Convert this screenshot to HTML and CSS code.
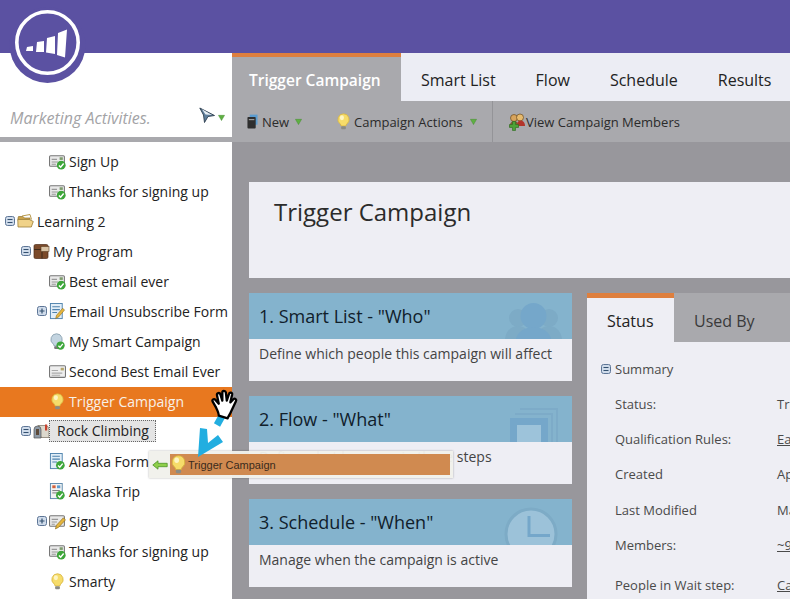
FILE: index.html

```html
<!DOCTYPE html>
<html lang="en">
<head>
  <meta charset="UTF-8" />
  <title>Trigger Campaign</title>
  <link rel="stylesheet" href="styles.css">
</head>
<body>
  <svg class="defs" xmlns="http://www.w3.org/2000/svg">
    <symbol id="i-check" viewBox="0 0 10 10">
      <circle cx="5" cy="5" r="4.6" fill="#3da63a"/>
      <path d="M2.6 5.2 4.4 7 7.5 3.2" fill="none" stroke="#fff" stroke-width="1.5"/>
    </symbol>
    <symbol id="i-email" viewBox="0 0 16 16">
      <rect x="0.5" y="2.5" width="14" height="10" rx="1" fill="#e9e9e9" stroke="#777"/>
      <rect x="10" y="4" width="3" height="2.5" fill="#7d9c6c"/>
      <path d="M2.5 6h5M2.5 8.500h6M2.500 10.500h4" stroke="#999"/>
      <use href="#i-check" x="7" y="7" width="9" height="9"/>
    </symbol>
    <symbol id="i-email-plain" viewBox="0 0 16 16">
      <rect x="0.5" y="2.500" width="15" height="11" rx="1" fill="#eee" stroke="#777"/>
      <rect x="11" y="4.500" width="3" height="2.500" fill="#b5a66c"/>
      <path d="M2.500 7h6M2.500 9.500h10M2.500 11.500h8" stroke="#aaa"/>
    </symbol>
    <symbol id="i-email-edit" viewBox="0 0 16 16">
      <rect x="0.5" y="2.500" width="14" height="10" rx="1" fill="#e9e9e9" stroke="#777"/>
      <path d="M2.500 6h6M2.500 8.500h5M2.500 10.500h3" stroke="#999"/>
      <path d="M6 15 7 11.500 13.500 4.500 15.500 6.500 9 13.500Z" fill="#e5b53c" stroke="#8a6a1c" stroke-width=".6"/>
    </symbol>
    <symbol id="i-bulb" viewBox="0 0 16 18">
      <path d="M8 .8a6 6 0 0 0-3.600 10.800c.7.6.9 1.300 1 2.200h5.200c.1-.9.3-1.600 1-2.200A6 6 0 0 0 8 .8Z" fill="#f6dc6a" stroke="#d6b23c" stroke-width=".8"/>
      <ellipse cx="6.300" cy="5" rx="2.200" ry="2.600" fill="#fdf5c4"/>
      <rect x="5.500" y="14" width="5" height="3.200" rx="1" fill="#8b8b84"/>
    </symbol>
    <symbol id="i-bulb-grey" viewBox="0 0 16 18">
      <path d="M7 .8a6 6 0 0 0-3.600 10.800c.7.6.9 1.300 1 2.200h5.200c.1-.9.3-1.600 1-2.200A6 6 0 0 0 7 .8Z" fill="#c3d4e0" stroke="#7f97a8" stroke-width=".8"/>
      <rect x="4.500" y="14" width="5" height="3" rx="1" fill="#777"/>
      <use href="#i-check" x="6.500" y="8.500" width="9.500" height="9.500"/>
    </symbol>
    <symbol id="i-folder" viewBox="0 0 17 16">
      <path d="M1 4.500 1.500 3h4.500l1.500 1.500H13V7H1Z" fill="#c9a24c" stroke="#8f7431" stroke-width=".7"/>
      <path d="M1 13.500 .8 6h11.500l4 2-2 5.500Z" fill="#f0d288" stroke="#9c7f38" stroke-width=".8"/>
      <path d="M5 2.500 13 1l1.500 5" fill="none" stroke="#b99a4c"/>
    </symbol>
    <symbol id="i-program" viewBox="0 0 17 16">
      <rect x="1" y="1" width="14" height="14" rx="1.500" fill="#7b4a2a" stroke="#4d2d18" stroke-width=".7"/>
      <path d="M1 6h14M9 6v9" stroke="#3f2a1a"/>
      <rect x="8" y="3" width="8" height="5" fill="#d9c3a5" stroke="#5d3d22" stroke-width=".6"/>
    </symbol>
    <symbol id="i-mailbox" viewBox="0 0 17 16">
      <path d="M5 2h7a4 4 0 0 1 4 4v8H8Z" fill="#dcd8cd" stroke="#776f5f" stroke-width=".7"/>
      <path d="M1 6a3.500 3.500 0 0 1 7 0v8.500H1Z" fill="#8e9aa6" stroke="#555" stroke-width=".7"/>
      <path d="M3 5.500h3v6H3Z" fill="#5c4a3a"/>
      <rect x="12" y="1" width="2.200" height="6" fill="#c8412f"/>
    </symbol>
    <symbol id="i-form" viewBox="0 0 16 18">
      <rect x="0.500" y="0.500" width="12.500" height="16" fill="#e2eef7" stroke="#4f83ad"/>
      <path d="M2.500 4h8M2.500 7h8M2.500 10h5" stroke="#4f83ad" stroke-width="1.200"/>
      <path d="M6 16.500 7 13 13.500 5.500 15.500 7.500 9 15Z" fill="#e5b53c" stroke="#8a6a1c" stroke-width=".6"/>
    </symbol>
    <symbol id="i-form-ok" viewBox="0 0 16 18">
      <rect x="0.500" y="0.500" width="12.500" height="16" fill="#e2eef7" stroke="#4f83ad"/>
      <path d="M2.500 3.500h8M2.500 6.500h8M2.500 9.500h5" stroke="#4f83ad" stroke-width="1.200"/>
      <use href="#i-check" x="6" y="8" width="10" height="10"/>
    </symbol>
    <symbol id="i-page-ok" viewBox="0 0 16 18">
      <rect x="0.500" y="0.500" width="12.500" height="16" fill="#f2f2f2" stroke="#5b88ab"/>
      <rect x="2.500" y="2.500" width="3.500" height="3" fill="#d2603a"/>
      <rect x="7.500" y="2.500" width="3.500" height="3" fill="#5b9cd0"/>
      <path d="M2.500 8h8M2.500 10.500h5" stroke="#777"/>
      <use href="#i-check" x="6" y="8" width="10" height="10"/>
    </symbol>
    <symbol id="i-minus" viewBox="0 0 10 10">
      <rect x="0.500" y="0.500" width="9" height="9" rx="2" fill="#cfdbea" stroke="#5d7596"/>
      <path d="M2.500 3.500h5M2.500 6.500h5" stroke="#33506f" stroke-width="1.200"/>
    </symbol>
    <symbol id="i-plus" viewBox="0 0 10 10">
      <rect x="0.500" y="0.500" width="9" height="9" rx="2" fill="#cfdbea" stroke="#5d7596"/>
      <path d="M2.500 5h5M5 2.500v5" stroke="#33506f" stroke-width="1.200"/>
    </symbol>
    <symbol id="i-caret" viewBox="0 0 8 8">
      <path d="M.5 1.500h7L4 7.500Z" fill="#5fb043" stroke="#3e8a2a" stroke-width=".5"/>
    </symbol>
  </svg>

  <div class="app">
    <header class="topbar"></header>

    <div class="layout">
      <aside class="sidebar">
        <div class="side-head">
          <span class="side-title">Marketing Activities.</span>
          <svg class="filter" viewBox="0 0 16 16">
            <path d="M.8 1 15.500 8.500 9 9.500 5.500 15.500 4.500 8Z" fill="#5f7f9c" stroke="#2c3d4e" stroke-width=".9"/>
            <path d="M3 2.200 13 8 6.500 7.500Z" fill="#e6edf3"/>
          </svg>
          <svg class="caret"><use href="#i-caret"/></svg>
        </div>

        <ul class="tree">
          <li class="node lvl-2"><span class="exp"></span><svg class="ico"><use href="#i-email"/></svg><span>Sign Up</span></li>
          <li class="node lvl-2"><span class="exp"></span><svg class="ico"><use href="#i-email"/></svg><span>Thanks for signing up</span></li>
          <li class="node lvl-0"><svg class="exp"><use href="#i-minus"/></svg><svg class="ico"><use href="#i-folder"/></svg><span>Learning 2</span></li>
          <li class="node lvl-1"><svg class="exp"><use href="#i-minus"/></svg><svg class="ico"><use href="#i-program"/></svg><span>My Program</span></li>
          <li class="node lvl-2"><span class="exp"></span><svg class="ico"><use href="#i-email"/></svg><span>Best email ever</span></li>
          <li class="node lvl-2"><svg class="exp"><use href="#i-plus"/></svg><svg class="ico"><use href="#i-form"/></svg><span>Email Unsubscribe Form</span></li>
          <li class="node lvl-2"><span class="exp"></span><svg class="ico"><use href="#i-bulb-grey"/></svg><span>My Smart Campaign</span></li>
          <li class="node lvl-2"><span class="exp"></span><svg class="ico"><use href="#i-email-plain"/></svg><span>Second Best Email Ever</span></li>
          <li class="node lvl-2 active"><span class="exp"></span><svg class="ico"><use href="#i-bulb"/></svg><span>Trigger Campaign</span></li>
          <li class="node lvl-1"><svg class="exp"><use href="#i-minus"/></svg><svg class="ico"><use href="#i-mailbox"/></svg><span class="drop-target">Rock Climbing</span></li>
          <li class="node lvl-2"><span class="exp"></span><svg class="ico"><use href="#i-form-ok"/></svg><span>Alaska Form</span></li>
          <li class="node lvl-2"><span class="exp"></span><svg class="ico"><use href="#i-page-ok"/></svg><span>Alaska Trip</span></li>
          <li class="node lvl-2"><svg class="exp"><use href="#i-plus"/></svg><svg class="ico"><use href="#i-email-edit"/></svg><span>Sign Up</span></li>
          <li class="node lvl-2"><span class="exp"></span><svg class="ico"><use href="#i-email"/></svg><span>Thanks for signing up</span></li>
          <li class="node lvl-2"><span class="exp"></span><svg class="ico"><use href="#i-bulb"/></svg><span>Smarty</span></li>
        </ul>
      </aside>

      <main class="main">
        <nav class="tabs">
          <a class="tab current">Trigger Campaign</a>
          <a class="tab">Smart List</a>
          <a class="tab">Flow</a>
          <a class="tab">Schedule</a>
          <a class="tab">Results</a>
        </nav>

        <div class="toolbar">
          <div class="tool tool-new">
            <svg class="tool-ico" viewBox="0 0 12 16">
              <rect x="3" y="0.500" width="8.500" height="11" fill="#5b9cd0"/>
              <rect x="0.500" y="3" width="9" height="12.500" rx="1" fill="#2e2e2e"/>
              <path d="M2 6h6" stroke="#bbb"/>
            </svg>
            <span>New</span>
            <svg class="caret"><use href="#i-caret"/></svg>
          </div>
          <div class="tool tool-actions">
            <svg class="tool-bulb"><use href="#i-bulb"/></svg>
            <span>Campaign Actions</span>
            <svg class="caret"><use href="#i-caret"/></svg>
          </div>
          <div class="tool tool-members">
            <svg class="tool-people" viewBox="0 0 18 18">
              <circle cx="6" cy="5" r="3.500" fill="#d8a45c" stroke="#6b4a1e" stroke-width=".7"/>
              <circle cx="12" cy="4.500" r="3.500" fill="#e7bb6e" stroke="#6b4a1e" stroke-width=".7"/>
              <path d="M1.500 14c0-4 2.500-6 5-6s4 2 4 6Z" fill="#7d5a34"/>
              <path d="M9 13c0-4 1.500-5.500 3.500-5.500S17 9 17 13Z" fill="#b3352b"/>
              <path d="M4.500 8.500h3v3h3v3h-3v3h-3v-3h-3v-3h3Z" fill="#4da338" stroke="#2c6a1e" stroke-width=".6"/>
            </svg>
            <span>View Campaign Members</span>
          </div>
        </div>

        <div class="content">
          <section class="title-card"><h1>Trigger Campaign</h1></section>

          <div class="columns">
            <div class="steps">
              <section class="step">
                <div class="step-head">
                  <h2>1. Smart List - "Who"</h2>
                  <svg class="step-art art-who" viewBox="0 0 57 36">
                    <circle cx="13" cy="15" r="9" fill="#7dabc6"/>
                    <circle cx="44" cy="15" r="9" fill="#7dabc6"/>
                    <path d="M0 36c1-9 7-13 13-13s12 4 13 13ZM31 36c1-9 7-13 13-13s12 4 13 13Z" fill="#7dabc6"/>
                    <circle cx="28.500" cy="13" r="13" fill="#75a7ca"/>
                    <path d="M11 36c1-7 9-12 17.500-12S45 29 46 36Z" fill="#75a7ca"/>
                  </svg>
                </div>
                <p>Define which people this campaign will affect</p>
              </section>
              <section class="step">
                <div class="step-head">
                  <h2>2. Flow - "What"</h2>
                  <svg class="step-art art-what" viewBox="0 0 48 34">
                    <path d="M10 2V0h38v34h-2V2Z" fill="#7dabc8"/>
                    <path d="M5 7V5h38v29h-2V7Z" fill="#7dabc8"/>
                    <path d="M0 34V10h38v24h-7V17H7v17Z" fill="#75a7ca"/>
                    <rect x="7" y="17" width="24" height="17" fill="#9dc3da"/>
                  </svg>
                </div>
                <p>Define what happens in these steps</p>
              </section>
              <section class="step">
                <div class="step-head">
                  <h2>3. Schedule - "When"</h2>
                  <svg class="step-art art-when" viewBox="0 0 54 38">
                    <circle cx="27" cy="27" r="25" fill="#9cc2d9" stroke="#7dabc6" stroke-width="3"/>
                    <path d="M25 9v19.500h21" fill="none" stroke="#75a7ca" stroke-width="3"/>
                  </svg>
                </div>
                <p>Manage when the campaign is active</p>
              </section>
            </div>

            <section class="panel">
              <div class="panel-tabs">
                <a class="panel-tab current">Status</a>
                <a class="panel-tab">Used By</a>
              </div>
              <div class="panel-body">
                <div class="summary-head"><svg class="exp"><use href="#i-minus"/></svg><span>Summary</span></div>
                <dl class="summary">
                  <dt>Status:</dt><dd>Triggered</dd>
                  <dt>Qualification Rules:</dt><dd><a>Each</a></dd>
                  <dt>Created</dt><dd>Apr</dd>
                  <dt>Last Modified</dt><dd>May</dd>
                  <dt>Members:</dt><dd><a>~9</a></dd>
                  <dt class="last">People in Wait step:</dt><dd class="last"><a>Cancel</a></dd>
                </dl>
              </div>
            </section>
          </div>
        </div>
      </main>
    </div>

    <svg class="logo" viewBox="0 0 95 90">
      <circle cx="47.500" cy="45" r="38" fill="#5b51a2"/>
      <circle cx="47.500" cy="42.500" r="30.700" fill="none" stroke="#fff" stroke-width="3.600"/>
      <path d="M27 47 33 46V51H26ZM37 42 44 41V52H36ZM47 38 55 36V54L46 52.500ZM58 33 67 29.500 65 57.500 57 55Z" fill="#fff"/>
    </svg>

    <div class="drag-proxy">
      <svg class="drag-arrow" viewBox="0 0 16 10">
        <path d="M.8 5 6 .8v2.500h9.200v3.400H6v2.500Z" fill="#8ecf4a" stroke="#4d9328" stroke-width=".8"/>
      </svg>
      <div class="drag-label">
        <svg class="ico"><use href="#i-bulb"/></svg>
        <span>Trigger Campaign</span>
      </div>
    </div>

    <svg class="callout" viewBox="0 0 40 60">
      <path d="M33 3 23 21" stroke="#22aee0" stroke-width="7" fill="none"/>
      <path d="M4 53 6 24 13 25 14 39 24 31 29 38Z" fill="#22aee0"/>
    </svg>

    <svg class="hand" viewBox="0 0 32 36">
      <path d="M6 21 2 14c-1-2 1.500-3.500 3-2l4 4.500L7 7c-.5-2.500 3-3.500 3.800-1L13 13 13 4c0-2.500 3.500-2.500 4 0l1 9L20.500 5.500c.7-2.300 4-1.500 3.500 1L22 15l3.500-3.500c1.600-1.600 4 .3 2.800 2.200L23 25c-1.500 3.500-3.500 6-4 8L9 30c0-3-1-5-3-9Z" fill="#fff" stroke="#000" stroke-width="2.600" stroke-linejoin="round"/>
    </svg>
  </div>
</body>
</html>
```

FILE: styles.css

```css
* {
  box-sizing: border-box;
}
html, body {
  margin: 0;
  height: 100%;
  overflow: hidden;
}
body {
  font-family: "Open Sans", "Liberation Sans", sans-serif;
  font-size: 14px;
  color: #222;
  background-color: #98979c;
}
.defs {
  display: none;
}
.app {
  position: relative;
  width: 790px;
  height: 599px;
  overflow: hidden;
}
.topbar {
  height: 53px;
  background-color: #5b51a2;
}
.layout {
  display: flex;
  height: 546px;
}

/* left tree */
.sidebar {
  flex: 0 0 232px;
  background-color: #fff;
}
.side-head {
  height: 89px;
  padding: 0 7px 8px 10px;
  display: flex;
  align-items: flex-end;
  border-bottom: 5px solid #a9a9ad;
}
.side-title {
  flex: 1;
  font-size: 16px;
  font-style: italic;
  color: #a3a3a6;
}
.filter {
  width: 16px;
  height: 16px;
  margin: 0 3px 6px 0;
}
.caret {
  width: 7px;
  height: 7px;
  flex: none;
}
.side-head .caret {
  margin-bottom: 8px;
}
.tree {
  list-style: none;
  margin: 5px 0 0;
  padding: 0;
}
.node {
  display: flex;
  align-items: center;
  height: 30px;
  padding-bottom: 2px;
  font-size: 14px;
  white-space: nowrap;
}
.lvl-0 { padding-left: 5px; }
.lvl-1 { padding-left: 21px; }
.lvl-2 { padding-left: 37px; }
.exp {
  flex: none;
  width: 10px;
  height: 10px;
  margin-right: 2px;
}
.ico {
  flex: none;
  width: 17px;
  height: 17px;
  margin-right: 3px;
}
.node.active {
  background-color: #e8781f;
  color: #f8f1e8;
}
.drop-target {
  margin-left: -4px;
  padding: 0 6px 0 7px;
  line-height: 20px;
  background-color: #e4e4e4;
  border: 1px dotted #666;
}

/* main area */
.main {
  flex: 1;
  min-width: 0;
}
.tabs {
  display: flex;
  height: 48px;
  background-color: #ecedf4;
}
.tab {
  padding: 7px 20px 0;
  line-height: 40px;
  font-size: 16px;
  white-space: nowrap;
}
.tab.current {
  flex: 0 0 169px;
  padding: 3px 0 0 17px;
  background-color: #a9a9ad;
  border-top: 4px solid #de7f3e;
  color: #fff;
  font-size: 15.500px;
  font-weight: 600;
}
.toolbar {
  display: flex;
  align-items: stretch;
  height: 41px;
  background-color: #a9a9ad;
  font-size: 13px;
  color: #2b2b2b;
}
.tool {
  display: flex;
  align-items: center;
}
.tool-new {
  padding-left: 15px;
  width: 104px;
}
.tool-new span { margin: 0 6px 0 4px; }
.tool-ico {
  width: 11px;
  height: 15px;
}
.tool-actions {
  width: 157px;
  border-right: 1px solid #949498;
}
.tool-bulb {
  width: 15px;
  height: 17px;
  margin-right: 3px;
}
.tool-actions span { margin-right: 7px; }
.tool-members {
  padding-left: 15px;
}
.tool-people {
  width: 18px;
  height: 18px;
}
.content {
  padding: 40px 0 0 17px;
}
.title-card {
  height: 96px;
  padding: 13px 25px;
  background-color: #eeeef4;
}
h1 {
  margin: 0;
  font-size: 24px;
  font-weight: 400;
  color: #2b2b2b;
}
.columns {
  display: flex;
  gap: 15px;
  margin-top: 15px;
}
.steps {
  flex: 0 0 323px;
  display: flex;
  flex-direction: column;
  gap: 15px;
}
.step {
  height: 88px;
  background-color: #eeeef4;
}
.step-head {
  position: relative;
  height: 46px;
  padding-left: 10px;
  overflow: hidden;
  background-color: #84b3cd;
}
h2 {
  margin: 0;
  font-size: 18px;
  font-weight: 400;
  line-height: 47px;
  color: #10202b;
}
.step-art {
  position: absolute;
  bottom: 0;
}
.art-who {
  right: 10px;
  width: 57px;
  height: 36px;
}
.art-what {
  right: 14px;
  width: 48px;
  height: 34px;
}
.art-when {
  right: 14px;
  width: 54px;
  height: 38px;
}
.step p {
  margin: 0;
  padding: 5px 10px;
  font-size: 14px;
  color: #444;
}
.panel {
  flex: 1;
  min-width: 0;
  background-color: #eeeef4;
}
.panel-tabs {
  display: flex;
  height: 49px;
  background-color: #a9a9ad;
}
.panel-tab {
  flex: 0 0 103px;
  padding-left: 20px;
  line-height: 57px;
  font-size: 16px;
  color: #3a3a3a;
}
.panel-tab.current {
  flex: 0 0 87px;
  padding: 0 0 0 20px;
  line-height: 47px;
  border-top: 5px solid #de7f3e;
  background-color: #eeeef4;
  color: #222;
}
.panel-body {
  height: 260px;
  padding: 18px 0 0 14px;
  font-size: 13px;
  color: #4a4a4a;
}
.summary-head {
  display: flex;
  align-items: center;
  gap: 4px;
}
.summary-head .exp {
  margin: 0;
}
.summary {
  display: grid;
  grid-template-columns: 162px 60px;
  grid-auto-rows: 35.300px;
  align-items: center;
  margin: 8px 0 0 14px;
  white-space: nowrap;
}
.summary dd {
  margin: 0;
}
.summary a {
  text-decoration: underline;
}
.summary .last {
  padding-top: 9px;
}

/* things floating over the page */
.logo {
  position: absolute;
  left: 0;
  top: 0;
  width: 95px;
  height: 90px;
}
.drag-proxy {
  position: absolute;
  left: 149px;
  top: 451px;
  width: 304px;
  height: 27px;
  display: flex;
  align-items: center;
  padding: 0 3px 0 3px;
  background-color: rgba(240, 240, 235, 0.96);
  box-shadow: 0 0 2px rgba(0, 0, 0, 0.3);
}
.drag-arrow {
  flex: none;
  width: 16px;
  height: 10px;
  margin-right: 2px;
}
.drag-label {
  flex: 1;
  height: 21px;
  display: flex;
  align-items: center;
  background-color: #d08a50;
  font-family: "Liberation Sans", Arial, sans-serif;
  font-size: 11px;
  color: #3a2a1c;
}
.drag-label .ico {
  height: 19px;
  margin-right: 1px;
}
.callout {
  position: absolute;
  left: 194px;
  top: 404px;
  width: 40px;
  height: 60px;
}
.hand {
  position: absolute;
  left: 210px;
  top: 389px;
  width: 30px;
  height: 32px;
}
```
